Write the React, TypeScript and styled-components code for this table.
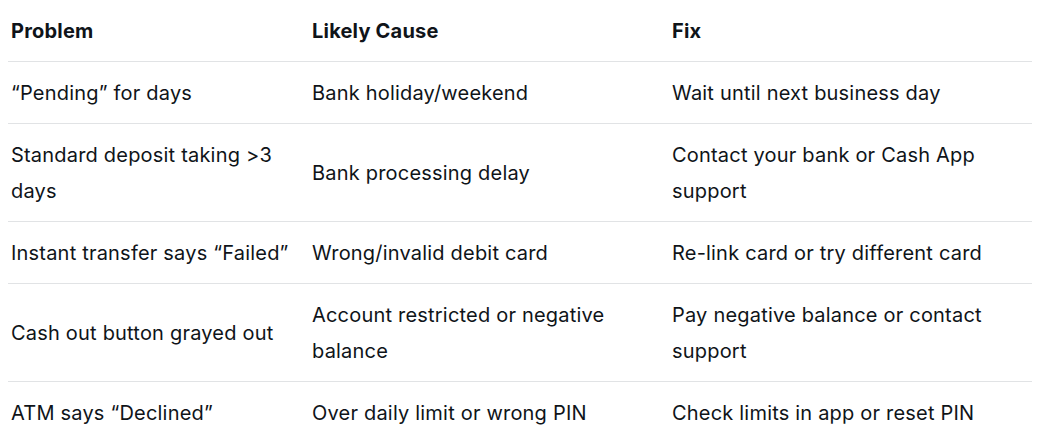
import styled, { createGlobalStyle } from "styled-components";

const GlobalStyle = createGlobalStyle`
    body {
        margin: 0;
        background: #ffffff;
        font-family: Inter, "Noto Sans", sans-serif;
        color: #0f1419;
    }
`

const Table = styled.div`
    margin: 0 8px;
    width: 1024px;
    display: grid;
    grid-template-columns: 301px 360px 1fr;
`

const Cell = styled.div<{ $head?: boolean; $last?: boolean }>`
    padding: 13px 16px 12px 3px;
    font-size: 20px;
    line-height: 36px;
    letter-spacing: 0.2px;
    font-weight: ${(p) => (p.$head ? 700 : 400)};
    border-bottom: ${(p) => (p.$last ? "none" : "1px solid #e1e3e5")};
    display: flex;
    align-items: center;
`

const rows = [
    ["\u201cPending\u201d for days", "Bank holiday/weekend", "Wait until next business day"],
    ["Standard deposit taking >3 days", "Bank processing delay", "Contact your bank or Cash App support"],
    ["Instant transfer says \u201cFailed\u201d", "Wrong/invalid debit card", "Re-link card or try different card"],
    ["Cash out button grayed out", "Account restricted or negative balance", "Pay negative balance or contact support"],
    ["ATM says \u201cDeclined\u201d", "Over daily limit or wrong PIN", "Check limits in app or reset PIN"],
]

export default function App() {
    return (
        <>
            <GlobalStyle />
            <Table>
                <Cell $head>Problem</Cell>
                <Cell $head>Likely Cause</Cell>
                <Cell $head>Fix</Cell>
                {rows.map((row, i) =>
                    row.map((text, j) => (
                        <Cell key={i + "-" + j} $last={i === rows.length - 1}>{text}</Cell>
                    ))
                )}
            </Table>
        </>
    )
}
